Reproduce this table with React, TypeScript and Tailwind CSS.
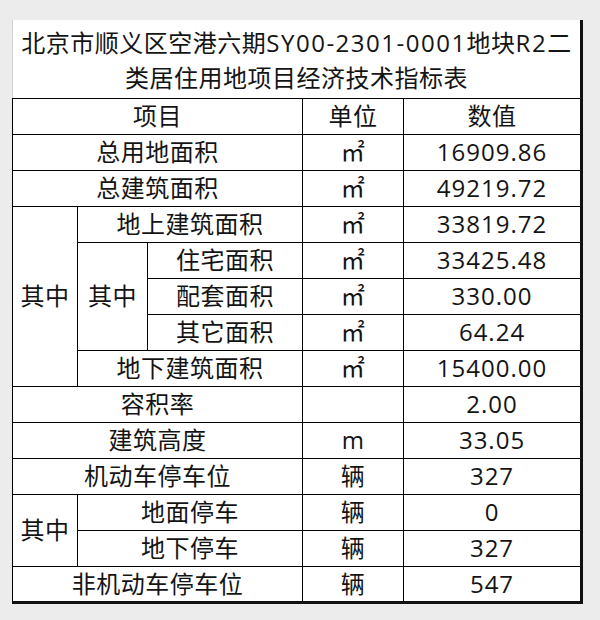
import React from 'react'

const FONT = { fontFamily: '"Open Sans", "Noto Sans CJK SC", sans-serif' }

type Row = { cells: { text: string; colSpan?: number; rowSpan?: number }[]; unit: string; value: string }

const rows: Row[] = [
  { cells: [{ text: '总用地面积', colSpan: 3 }], unit: '㎡', value: '16909.86' },
  { cells: [{ text: '总建筑面积', colSpan: 3 }], unit: '㎡', value: '49219.72' },
  { cells: [{ text: '其中', rowSpan: 5 }, { text: '地上建筑面积', colSpan: 2 }], unit: '㎡', value: '33819.72' },
  { cells: [{ text: '其中', rowSpan: 3 }, { text: '住宅面积' }], unit: '㎡', value: '33425.48' },
  { cells: [{ text: '配套面积' }], unit: '㎡', value: '330.00' },
  { cells: [{ text: '其它面积' }], unit: '㎡', value: '64.24' },
  { cells: [{ text: '地下建筑面积', colSpan: 2 }], unit: '㎡', value: '15400.00' },
  { cells: [{ text: '容积率', colSpan: 3 }], unit: '', value: '2.00' },
  { cells: [{ text: '建筑高度', colSpan: 3 }], unit: 'm', value: '33.05' },
  { cells: [{ text: '机动车停车位', colSpan: 3 }], unit: '辆', value: '327' },
  { cells: [{ text: '其中', rowSpan: 2 }, { text: '地面停车', colSpan: 2 }], unit: '辆', value: '0' },
  { cells: [{ text: '地下停车', colSpan: 2 }], unit: '辆', value: '327' },
  { cells: [{ text: '非机动车停车位', colSpan: 3 }], unit: '辆', value: '547' },
]

const cell = 'border border-black text-center p-0 leading-none tracking-[0.5px]'

export default function App() {
  return (
    <div className="w-[600px] h-[620px] bg-[#ececec] pt-[20px] pl-[12px]" style={FONT}>
      <table className="border-collapse bg-white text-[24px] text-[#141414] table-fixed w-[570px] border-r-[3px] border-b-[3px] border-r-[#111] border-b-[#111] border-l border-l-[#d0d0d0]">
        <colgroup>
          <col className="w-[65px]" />
          <col className="w-[70px]" />
          <col className="w-[155px]" />
          <col className="w-[101px]" />
          <col className="w-[178px]" />
        </colgroup>
        <tbody>
          <tr className="h-[78px]">
            <td colSpan={5} className="border-b border-black text-center leading-[35px] pt-[2px] whitespace-nowrap tracking-[0.5px]">
              北京市顺义区空港六期<span className="tracking-[1.5px]">SY00-2301-0001</span>地块<span className="tracking-[1.5px]">R2</span>二
              <br />
              类居住用地项目经济技术指标表
            </td>
          </tr>
          <tr className="h-[36px]">
            <td colSpan={3} className={cell}>项目</td>
            <td className={cell}>单位</td>
            <td className={cell}>数值</td>
          </tr>
          {rows.map((r, i) => (
            <tr key={i} className="h-[36px]">
              {r.cells.map((c, j) => (
                <td key={j} colSpan={c.colSpan} rowSpan={c.rowSpan} className={cell}>
                  {c.text}
                </td>
              ))}
              <td className={cell}>{r.unit}</td>
              <td className={`${cell} tracking-[1px]`}>{r.value}</td>
            </tr>
          ))}
        </tbody>
      </table>
    </div>
  )
}
